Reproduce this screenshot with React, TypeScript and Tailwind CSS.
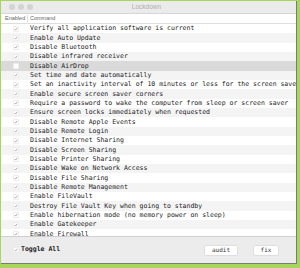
import React from 'react';

const commands = [
  { label: 'Verify all application software is current', on: true },
  { label: 'Enable Auto Update', on: true },
  { label: 'Disable Bluetooth', on: true },
  { label: 'Disable infrared receiver', on: true },
  { label: 'Disable AirDrop', on: false, selected: true },
  { label: 'Set time and date automatically', on: true },
  { label: 'Set an inactivity interval of 10 minutes or less for the screen saver', on: true },
  { label: 'Enable secure screen saver corners', on: true },
  { label: 'Require a password to wake the computer from sleep or screen saver', on: true },
  { label: 'Ensure screen locks immediately when requested', on: true },
  { label: 'Disable Remote Apple Events', on: true },
  { label: 'Disable Remote Login', on: true },
  { label: 'Disable Internet Sharing', on: true },
  { label: 'Disable Screen Sharing', on: true },
  { label: 'Disable Printer Sharing', on: true },
  { label: 'Disable Wake on Network Access', on: true },
  { label: 'Disable File Sharing', on: true },
  { label: 'Disable Remote Management', on: true },
  { label: 'Enable FileVault', on: true },
  { label: 'Destroy File Vault Key when going to standby', on: true },
  { label: 'Enable hibernation mode (no memory power on sleep)', on: true },
  { label: 'Enable Gatekeeper', on: true },
  { label: 'Enable Firewall', on: true },
];

function Check({ on }: { on: boolean }) {
  return (
    <div className="w-[6px] h-[6px] bg-white border border-[#ededed] rounded-[1px] flex items-center justify-center">
      {on && (
        <svg width="6" height="6" viewBox="0 0 6 6">
          <path d="M1.2 3.2 L2.4 4.6 L4.8 1.2" fill="none" stroke="#666" strokeWidth="0.8" />
        </svg>
      )}
    </div>
  );
}

export default function App() {
  return (
    <div className="w-[300px] h-[268px] bg-[#a6d75b] pt-px pl-px overflow-hidden">
      <div className="w-[296px] h-[263px] flex flex-col bg-[#ececec] border-r border-b border-[#7a7a7a] overflow-hidden">
        {/* title bar */}
        <div className="h-[13px] shrink-0 relative flex items-center border-b border-[#d6d6d6] bg-[#ebebeb]">
          <div className="flex gap-[3px] pl-[8px]">
            <div className="w-[6px] h-[6px] rounded-full bg-[#d3d3d3]" />
            <div className="w-[6px] h-[6px] rounded-full bg-[#d3d3d3]" />
            <div className="w-[6px] h-[6px] rounded-full bg-[#d3d3d3]" />
          </div>
          <div className="flex-1 text-center pr-[36px] text-[6.5px] text-[#b0b0b0] font-['Liberation_Sans',sans-serif]">
            Lockdown
          </div>
        </div>

        {/* header */}
        <div className="h-[10px] shrink-0 flex items-center bg-white border-b border-[#dedede] text-[5.5px] text-[#666] font-['Liberation_Sans',sans-serif]">
          <div className="w-[27px] pl-[4px] border-r border-[#dcdcdc] h-[7px] flex items-center">Enabled</div>
          <div className="pl-[2px]">Command</div>
        </div>

        {/* rows */}
        <div className="flex-1 overflow-hidden bg-white border-b border-[#cfcfcf]">
          {commands.map((c, i) => (
            <div
              key={c.label}
              className={
                'h-[9.33px] flex items-center whitespace-nowrap ' +
                (c.selected ? 'bg-[#dadada]' : i % 2 === 1 ? 'bg-[#f4f4f4]' : 'bg-white')
              }
            >
              <div className="w-[29px] shrink-0 flex justify-center pl-[1px]">
                <Check on={c.on} />
              </div>
              <div className="text-[6.5px] leading-none text-[#1c1c1c] font-['DejaVu_Sans_Mono',monospace]">
                {c.label}
              </div>
            </div>
          ))}
        </div>

        {/* footer */}
        <div className="h-[26px] shrink-0 flex items-center px-[12px] bg-[#ececec]">
          <Check on={true} />
          <span className="ml-[2px] text-[6.5px] font-bold text-[#222] font-['DejaVu_Sans_Mono',monospace]">
            Toggle All
          </span>
          <div className="ml-auto flex gap-[17px] pr-[6px]">
            <button className="w-[32px] h-[9px] bg-white rounded-[1px] shadow-[0_0_0_0.5px_#d0d0d0] text-[6px] text-[#333] font-['DejaVu_Sans_Mono',monospace] leading-none">
              audit
            </button>
            <button className="w-[24px] h-[9px] bg-white rounded-[1px] shadow-[0_0_0_0.5px_#d0d0d0] text-[6px] text-[#333] font-['DejaVu_Sans_Mono',monospace] leading-none">
              fix
            </button>
          </div>
        </div>
      </div>
    </div>
  );
}
